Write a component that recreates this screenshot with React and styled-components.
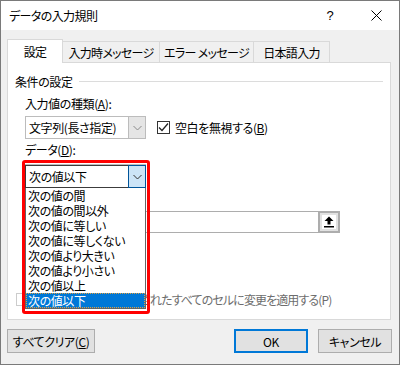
import React from "react";
import styled, { createGlobalStyle } from "styled-components";

const GlobalStyle = createGlobalStyle`
  html, body {
    margin: 0;
    padding: 0;
    background: #ffffff;
  }
  body {
    font-family: "Noto Sans CJK JP", "Liberation Sans", sans-serif;
    font-size: 12px;
    color: #000;
    font-feature-settings: "palt" 1;
    letter-spacing: -0.4px;
  }
`;

const Window = styled.div`
  box-sizing: border-box;
  width: 400px;
  height: 365px;
  border: 1px solid #7a7a7a;
  background: #f0f0f0;
  display: flex;
  flex-direction: column;
`;

const TitleBar = styled.div`
  height: 29px;
  background: #ffffff;
  display: flex;
  align-items: center;
  padding-left: 8px;
  font-size: 12px;
`;

const Title = styled.div`
  flex: 1;
  letter-spacing: -0.6px;
`;

const TitleButton = styled.div`
  width: 46px;
  height: 29px;
  display: flex;
  align-items: center;
  justify-content: center;
  font-size: 13px;
  font-family: "Liberation Sans", sans-serif;
`;

const Body = styled.div`
  padding: 9px 0 0 6px;
`;

const TabStrip = styled.div`
  display: flex;
  align-items: flex-end;
  height: 24px;
`;

const Tab = styled.div`
  box-sizing: border-box;
  width: ${(p) => p.$w}px;
  height: ${(p) => (p.$active ? "24px" : "22px")};
  display: flex;
  align-items: center;
  justify-content: center;
  white-space: nowrap;
  letter-spacing: -0.7px;
  background: ${(p) => (p.$active ? "#ffffff" : "#f0f0f0")};
  border: 1px solid #d9d9d9;
  border-bottom: ${(p) => (p.$active ? "none" : "1px solid #d9d9d9")};
  margin-right: -1px;
  position: relative;
  z-index: ${(p) => (p.$active ? 2 : 1)};
`;

const Panel = styled.div`
  box-sizing: border-box;
  width: 384px;
  height: 258px;
  margin-top: -1px;
  background: #ffffff;
  border: 1px solid #d9d9d9;
  padding: 10px 7px 0 7px;
  position: relative;
`;

const SectionHeader = styled.div`
  display: flex;
  align-items: center;
  height: 16px;
`;

const SectionLine = styled.div`
  flex: 1;
  height: 1px;
  background: #dcdcdc;
  margin-left: 6px;
`;

const Group = styled.div`
  padding-left: 10px;
  display: flex;
  flex-direction: column;
`;

const Label = styled.div`
  height: 16px;
  line-height: 16px;
  margin-top: ${(p) => p.$mt || 0}px;
`;

const Spacer = styled.div`
  height: ${(p) => p.$h}px;
`;

const Row = styled.div`
  display: flex;
  align-items: center;
  margin-top: ${(p) => p.$mt || 0}px;
`;

const Combo = styled.div`
  box-sizing: border-box;
  width: 121px;
  height: 23px;
  display: flex;
  border: 1px solid ${(p) => (p.$open ? "#3c3c3c" : "#bcbcbc")};
  background: #ffffff;
`;

const ComboText = styled.div`
  flex: 1;
  padding-left: 3px;
  display: flex;
  align-items: center;
  white-space: nowrap;
`;

const ComboButton = styled.div`
  box-sizing: border-box;
  width: 17px;
  display: flex;
  align-items: center;
  justify-content: center;
  background: ${(p) => (p.$open ? "#cce4f7" : "#e5e5e5")};
  border-left: 1px solid ${(p) => (p.$open ? "#005499" : "#bcbcbc")};
  ${(p) => p.$open && "border: 1px solid #005499; margin: -1px -1px -1px 0; width: 18px;"}
`;

const CheckBox = styled.div`
  box-sizing: border-box;
  flex: none;
  width: 13px;
  height: 13px;
  border: 1px solid ${(p) => (p.$disabled ? "#cccccc" : "#333333")};
  background: #ffffff;
  display: flex;
  align-items: center;
  justify-content: center;
  margin-right: ${(p) => p.$gap || 5}px;
`;

const CheckRow = styled.div`
  display: flex;
  align-items: center;
  white-space: nowrap;
  margin-left: ${(p) => p.$ml || 0}px;
  margin-top: ${(p) => p.$mt || 0}px;
  color: ${(p) => (p.$disabled ? "#6d6d6d" : "#000")};
  letter-spacing: ${(p) => (p.$disabled ? "-0.9px" : "-0.4px")};
`;

const TextField = styled.div`
  box-sizing: border-box;
  width: 315px;
  height: 22px;
  border: 1px solid #adadad;
  border-right: none;
  display: flex;
  justify-content: flex-end;
`;

const RefButton = styled.div`
  box-sizing: border-box;
  width: 22px;
  height: 22px;
  margin-top: -1px;
  border: 2px solid #adadad;
  background: #e1e1e1;
  display: flex;
  align-items: center;
  justify-content: center;
`;

const RefInner = styled.div`
  width: 14px;
  height: 14px;
  background: #ffffff;
  display: flex;
  align-items: center;
  justify-content: center;
`;

const Highlight = styled.div`
  position: absolute;
  left: 14px;
  top: 97px;
  width: 128px;
  box-sizing: border-box;
  border: 3px solid #ff0000;
  border-radius: 3px;
  padding: 2px 1px 2px 0;
  z-index: 5;
`;

const DropList = styled.div`
  box-sizing: border-box;
  width: 121px;
  border: 1px solid #646464;
  border-top: none;
  background: #ffffff;
`;

const DropItem = styled.div`
  box-sizing: border-box;
  height: 15px;
  line-height: 15px;
  padding-left: 2px;
  white-space: nowrap;
  background: ${(p) => (p.$selected ? "#0078d7" : "transparent")};
  color: ${(p) => (p.$selected ? "#ffffff" : "#000")};
  outline: ${(p) => (p.$selected ? "1px dotted #e0a040" : "none")};
  outline-offset: -1px;
`;

const Footer = styled.div`
  display: flex;
  padding: 9px 7px 0 0;
`;

const Button = styled.div`
  box-sizing: border-box;
  width: ${(p) => p.$w}px;
  height: 24px;
  display: flex;
  align-items: center;
  justify-content: center;
  white-space: nowrap;
  background: #e1e1e1;
  border: ${(p) => (p.$focus ? "2px solid #0078d7" : "1px solid #adadad")};
  margin-left: ${(p) => p.$ml || 0}px;
`;

const U = styled.span`
  text-decoration: underline;
  text-underline-offset: 1px;
`;

const Chevron = ({ color = "#606060" }) => (
  <svg width="9" height="6" viewBox="0 0 9 6">
    <polyline points="0.5,1 4.5,5 8.5,1" fill="none" stroke={color} strokeWidth="1" />
  </svg>
);

const Check = () => (
  <svg width="11" height="11" viewBox="0 0 11 11">
    <polyline points="1,5.5 4,8.5 10,1.5" fill="none" stroke="#222" strokeWidth="1.3" />
  </svg>
);

const CloseIcon = () => (
  <svg width="11" height="11" viewBox="0 0 11 11">
    <line x1="0.5" y1="0.5" x2="10.5" y2="10.5" stroke="#000" strokeWidth="1" />
    <line x1="10.5" y1="0.5" x2="0.5" y2="10.5" stroke="#000" strokeWidth="1" />
  </svg>
);

const UploadIcon = () => (
  <svg width="10" height="12" viewBox="0 0 10 12">
    <path d="M5 0.5 L9.5 5 H6.5 V8.5 H3.5 V5 H0.5 Z" fill="#000" />
    <rect x="0" y="10" width="10" height="1.5" fill="#000" />
  </svg>
);

const options = [
  "次の値の間",
  "次の値の間以外",
  "次の値に等しい",
  "次の値に等しくない",
  "次の値より大きい",
  "次の値より小さい",
  "次の値以上",
  "次の値以下",
];

export default function App() {
  return (
    <>
      <GlobalStyle />
      <Window>
        <TitleBar>
          <Title>データの入力規則</Title>
          <TitleButton>?</TitleButton>
          <TitleButton>
            <CloseIcon />
          </TitleButton>
        </TitleBar>
        <Body>
          <TabStrip>
            <Tab $active $w={56}>設定</Tab>
            <Tab $w={98}>入力時メッセージ</Tab>
            <Tab $w={95}>エラー メッセージ</Tab>
            <Tab $w={77}>日本語入力</Tab>
          </TabStrip>
          <Panel>
            <SectionHeader>
              条件の設定
              <SectionLine />
            </SectionHeader>
            <Group>
              <Label $mt={7}>
                入力値の種類(<U>A</U>):
              </Label>
              <Row $mt={4}>
                <Combo>
                  <ComboText>文字列(長さ指定)</ComboText>
                  <ComboButton>
                    <Chevron color="#8a8a8a" />
                  </ComboButton>
                </Combo>
                <CheckRow $ml={11}>
                  <CheckBox>
                    <Check />
                  </CheckBox>
                  空白を無視する(<U>B</U>)
                </CheckRow>
              </Row>
              <Label $mt={3}>
                データ(<U>D</U>):
              </Label>
              <Row $mt={6}>
                <Combo>
                  <ComboText>次の値以下</ComboText>
                  <ComboButton>
                    <Chevron />
                  </ComboButton>
                </Combo>
              </Row>
              <Spacer $h={24} />
              <Row>
                <TextField>
                  <RefButton>
                    <RefInner>
                      <UploadIcon />
                    </RefInner>
                  </RefButton>
                </TextField>
              </Row>
            </Group>
            <CheckRow $disabled $ml={1} $mt={58}>
              <CheckBox $disabled $gap={13} />
              同じ入力規則が設定されたすべてのセルに変更を適用する(P)
            </CheckRow>
            <Highlight>
              <Combo $open>
                <ComboText>次の値以下</ComboText>
                <ComboButton $open>
                  <Chevron color="#333" />
                </ComboButton>
              </Combo>
              <DropList>
                {options.map((o, i) => (
                  <DropItem key={o} $selected={i === options.length - 1}>
                    {o}
                  </DropItem>
                ))}
              </DropList>
            </Highlight>
          </Panel>
          <Footer>
            <Button $w={88}>
              すべてクリア(<U>C</U>)
            </Button>
            <Button $w={74} $focus $ml={139}>
              OK
            </Button>
            <Button $w={74} $ml={10}>
              キャンセル
            </Button>
          </Footer>
        </Body>
      </Window>
    </>
  );
}
